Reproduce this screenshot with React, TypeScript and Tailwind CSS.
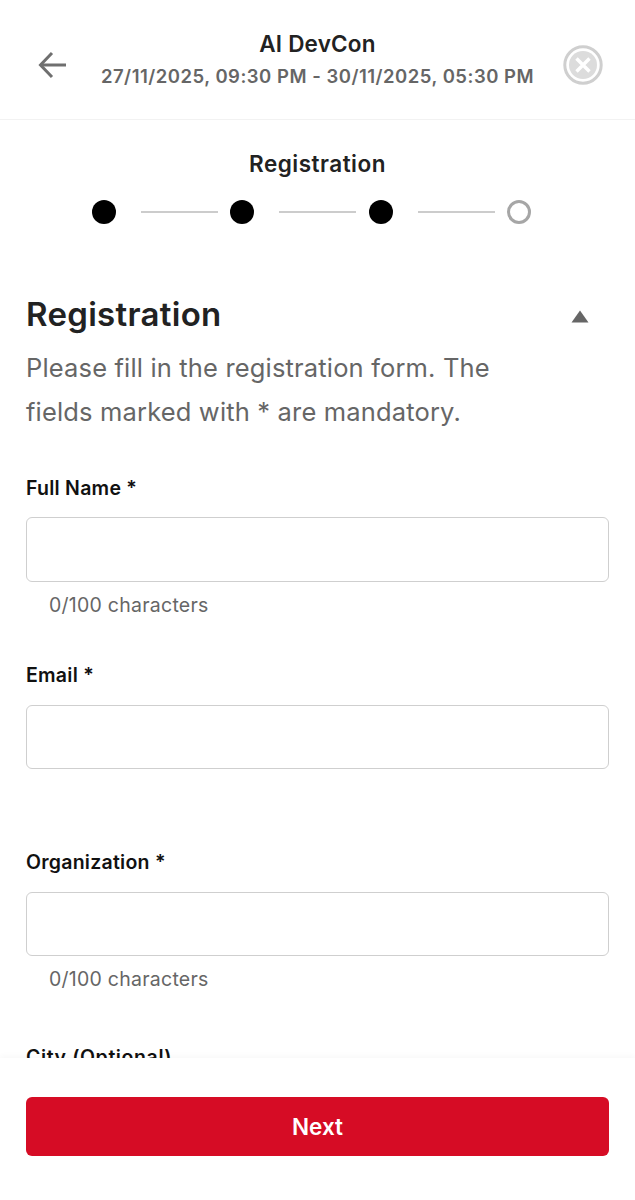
import React from "react";

const font = { fontFamily: '"Inter", "Liberation Sans", sans-serif' };

function Field({ label, helper, gapClass, inputClass }: { label: string; helper?: boolean; gapClass: string; inputClass: string }) {
  return (
    <div className={gapClass}>
      <div className="text-[19.5px] leading-[26px] tracking-[0.25px] font-semibold text-[#111111]">{label}</div>
      <div className={`rounded-[6px] border border-[#cfcfcf] bg-white ${inputClass}`} />
      {helper && <div className="mt-[10px] ml-[23px] text-[19.5px] leading-[26px] tracking-[0.25px] text-[#666666]">0/100 characters</div>}
    </div>
  );
}

function Dot({ filled }: { filled: boolean }) {
  return filled ? (
    <div className="w-[24px] h-[24px] rounded-full bg-black shrink-0" />
  ) : (
    <div className="w-[24px] h-[24px] rounded-full border-[3px] border-[#a6a6a6] bg-white shrink-0" />
  );
}

function Line() {
  return <div className="w-[77px] h-[2px] ml-[25px] mr-[12.5px] bg-[#cccccc] shrink-0" />;
}

export default function App() {
  return (
    <div style={font} className="w-[635px] h-[1200px] flex flex-col overflow-hidden bg-white">
      <header className="h-[120px] shrink-0 border-b border-[#f2f2f2] flex items-center pl-[38px] pr-[32px]">
        <svg width="29" height="28" viewBox="0 0 29 28" fill="none" stroke="#6f6f6f" strokeWidth="3" className="shrink-0 mt-[10px]">
          <path d="M28 14H3" />
          <path d="M14 2 2.5 14 14 26" />
        </svg>
        <div className="flex-1 flex flex-col items-center min-w-0 -mt-[1px] pl-[5px]">
          <div className="text-[22.5px] leading-[28px] tracking-[0.2px] font-semibold text-[#222222]">AI DevCon</div>
          <div className="mt-[5px] text-[18.5px] leading-[26px] tracking-[0.5px] font-semibold text-[#666666] whitespace-nowrap">
            27/11/2025, 09:30 PM - 30/11/2025, 05:30 PM
          </div>
        </div>
        <svg width="40" height="40" viewBox="0 0 40 40" fill="none" className="shrink-0 mt-[10px]">
          <circle cx="20" cy="20" r="18.2" fill="#ffffff" stroke="#cfcfcf" strokeWidth="3" />
          <circle cx="20" cy="20" r="14" fill="#dcdcdc" />
          <path d="M13.5 13.5 26.5 26.5M26.5 13.5 13.5 26.5" stroke="#ffffff" strokeWidth="3.4" />
        </svg>
      </header>

      <main className="flex-1 min-h-0 overflow-hidden">
        <div className="pt-[30px] text-center text-[22.5px] leading-[28px] tracking-[0.5px] font-semibold text-[#222222]">Registration</div>
        <div className="mt-[22px] flex items-center justify-center pr-[12px]">
          <Dot filled />
          <Line />
          <Dot filled />
          <Line />
          <Dot filled />
          <Line />
          <Dot filled={false} />
        </div>
        <div className="px-[26px]">
          <div className="mt-[68px] flex items-center justify-between">
            <h1 className="text-[33px] leading-[44px] tracking-[0.3px] font-semibold text-[#222222]">Registration</h1>
            <svg width="18" height="13" viewBox="0 0 18 13" className="mr-[20px] mt-[4px]">
              <path d="M9 0.5 17.5 12.5H0.5Z" fill="#666666" />
            </svg>
          </div>
          <p className="mt-[10px] w-[480px] text-[25.5px] leading-[44px] tracking-[0.16px] text-[#666666]">
            Please fill in the registration form. The fields marked with * are mandatory.
          </p>
          <Field label="Full Name *" helper gapClass="mt-[41px]" inputClass="mt-[16px] h-[65px]" />
          <Field label="Email *" gapClass="mt-[44px]" inputClass="mt-[17px] h-[64px]" />
          <Field label="Organization *" gapClass="mt-[80px]" helper inputClass="mt-[17px] h-[64px]" />
          <div className="mt-[52px] text-[19.5px] leading-[26px] tracking-[0.6px] font-semibold text-[#111111]">City (Optional)</div>
        </div>
      </main>

      <footer className="h-[142px] shrink-0 bg-white shadow-[0_-2px_6px_rgba(0,0,0,0.03)] px-[26px] pt-[39px]">
        <button className="w-[583px] h-[59px] rounded-[6px] bg-[#d60c25] text-white text-[22.5px] font-semibold flex items-center justify-center">
          Next
        </button>
      </footer>
    </div>
  );
}
